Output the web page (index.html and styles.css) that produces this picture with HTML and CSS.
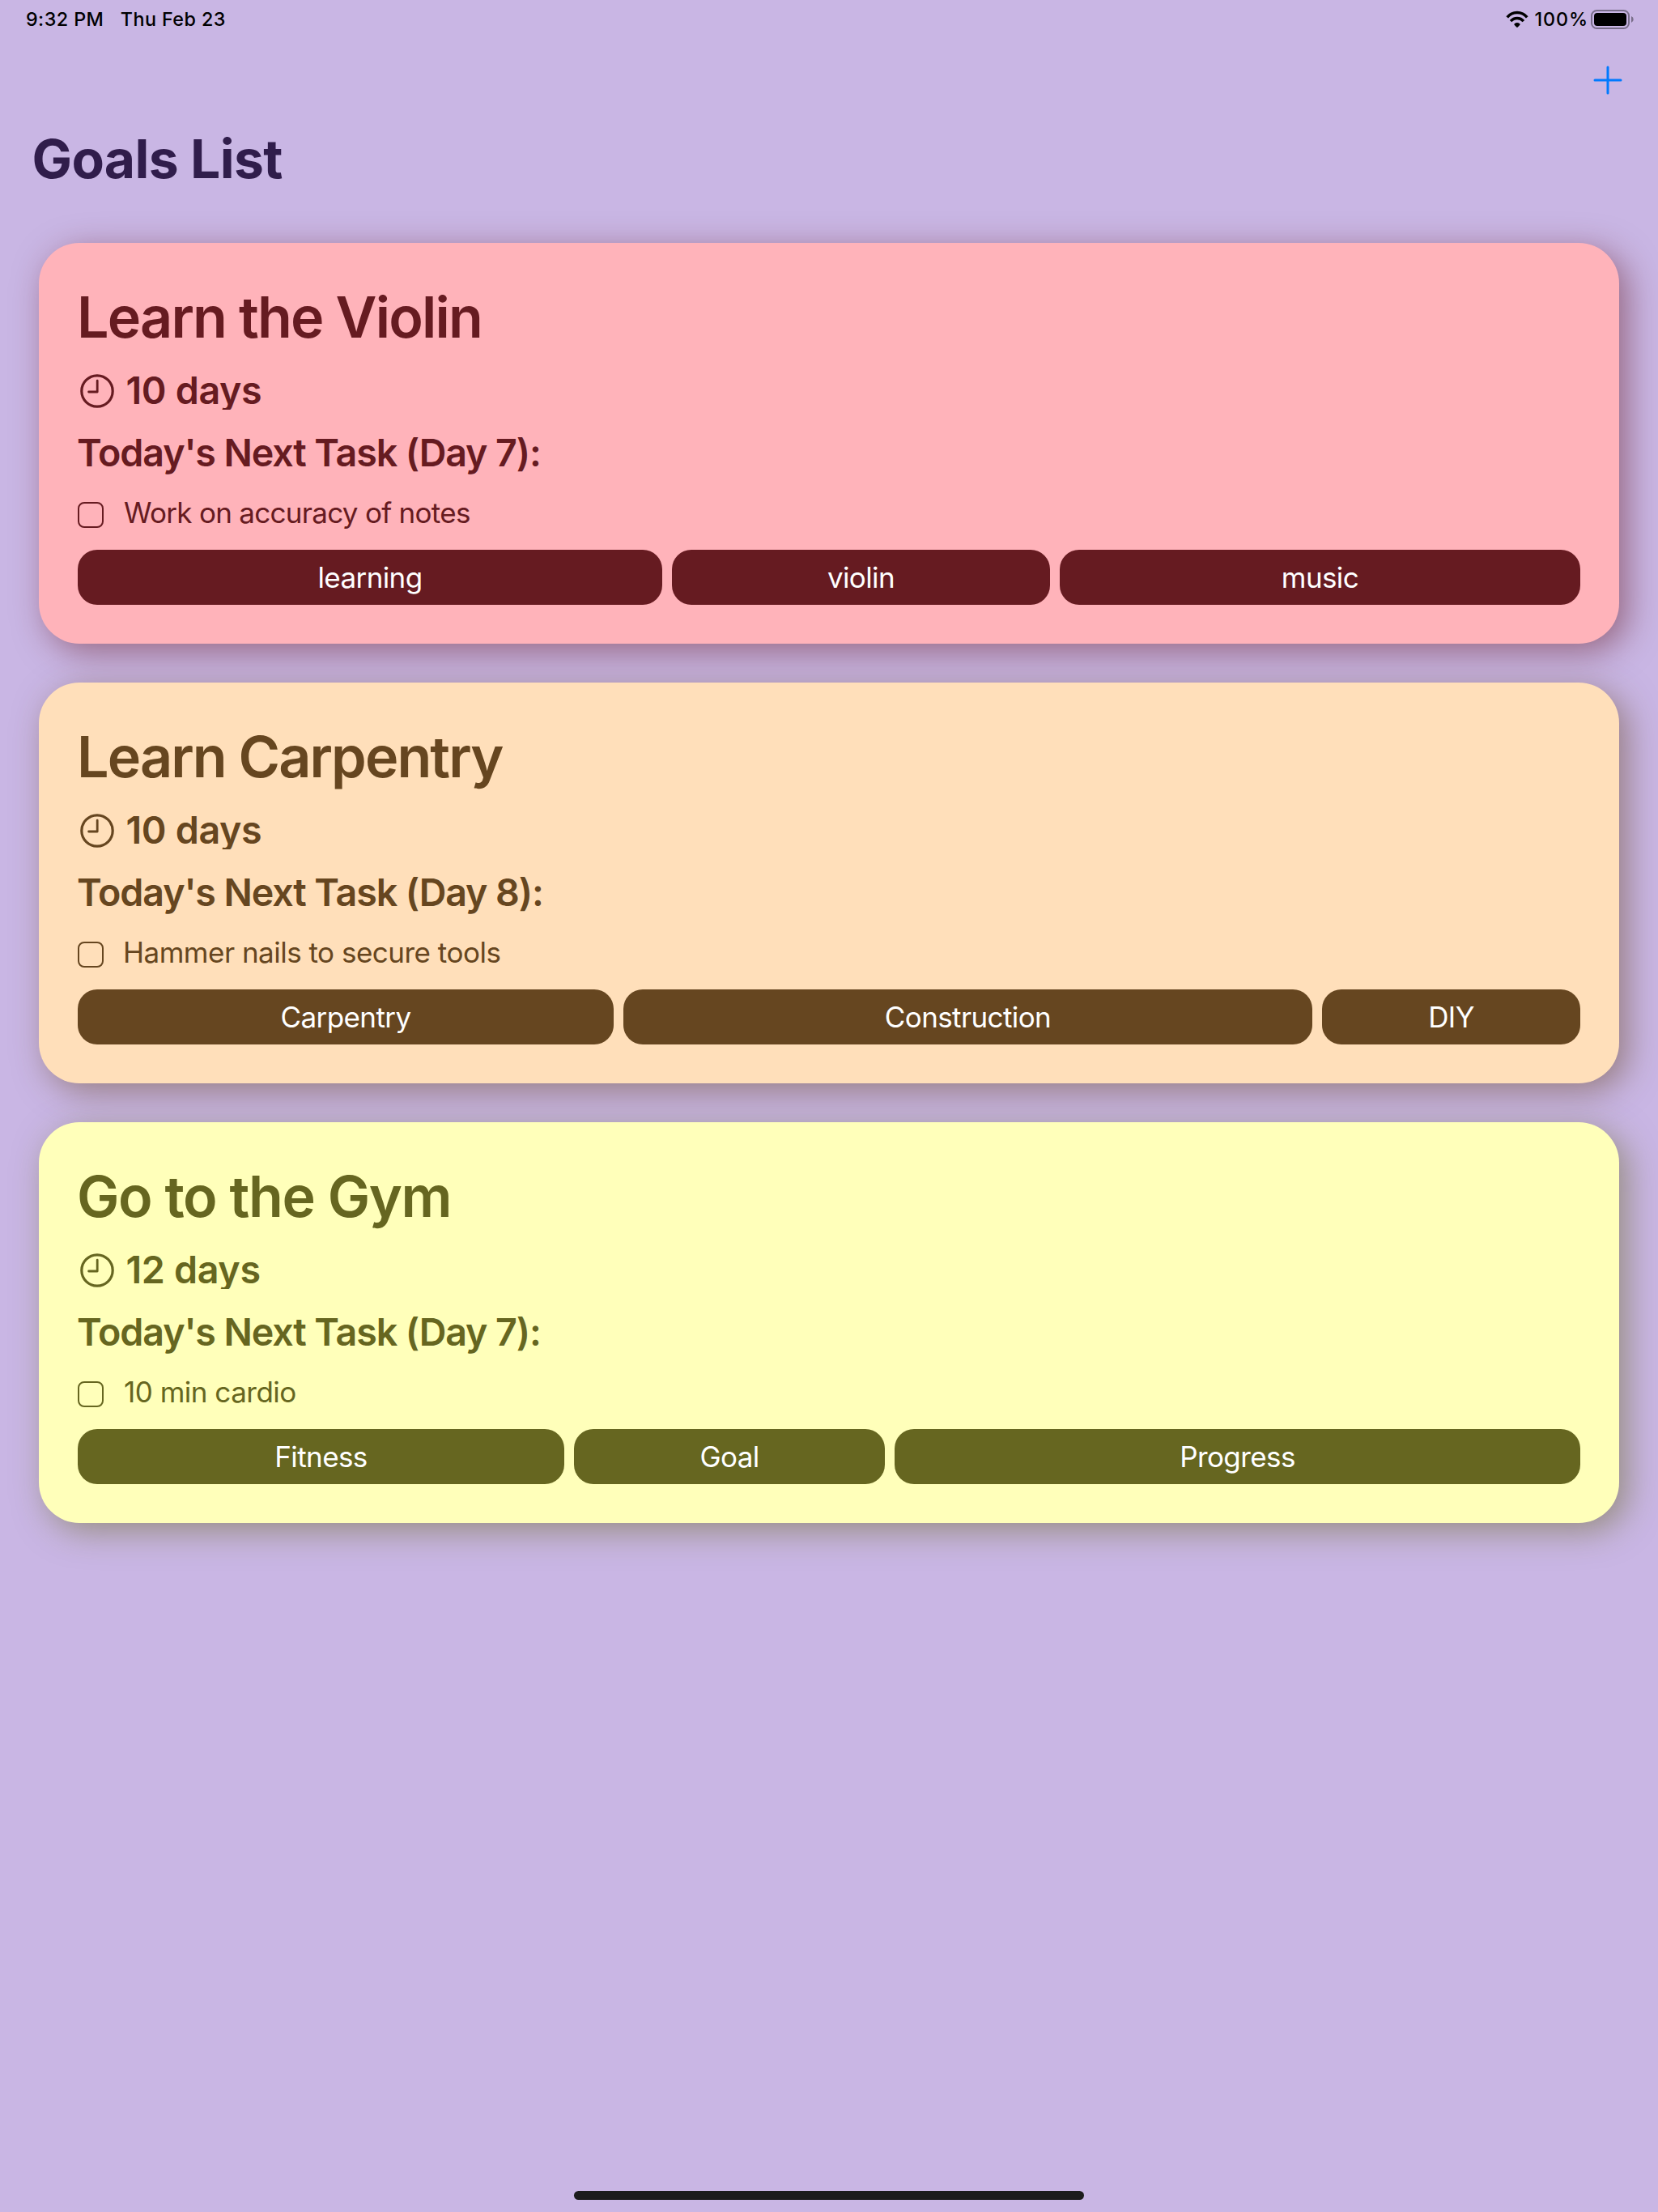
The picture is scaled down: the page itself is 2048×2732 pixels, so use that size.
FILE: index.html
```html
<!DOCTYPE html>
<html lang="en">
<head>
<meta charset="utf-8">
<title>Goals List</title>
<link rel="stylesheet" href="styles.css">
</head>
<body>
<svg class="sprite" aria-hidden="true">
  <symbol id="clock" viewBox="0 0 42 42">
    <circle cx="21" cy="21" r="19.2" fill="none" stroke="currentColor" stroke-width="3.2"/>
    <path d="M21.2 8.2V22H10.6" fill="none" stroke="currentColor" stroke-width="2.8" stroke-linecap="round" stroke-linejoin="round"/>
  </symbol>
</svg>
<div class="screen">
  <header class="status">
    <div class="status-left">
      <span class="time">9:32 PM</span>
      <span class="date">Thu Feb 23</span>
    </div>
    <div class="status-right">
      <svg class="wifi" viewBox="0 0 28 22">
        <g fill="none" stroke="#000" stroke-width="3.4">
          <path d="M1.7 8.4A15.8 15.8 0 0 1 26.3 8.4"/>
          <path d="M6.1 13.1A10.4 10.4 0 0 1 21.9 13.1"/>
        </g>
        <path d="M13.2 20.4L10.6 17.8Q9.9 17 10.8 16.3A5.4 5.4 0 0 1 17.2 16.3Q18.1 17 17.4 17.8L14.8 20.4Q14 21.2 13.2 20.4Z"/>
      </svg>
      <span class="percent">100%</span>
      <svg class="battery" viewBox="0 0 54 24">
        <rect x="1" y="1" width="46" height="22" rx="6.5" fill="none" stroke="#000" stroke-opacity=".4" stroke-width="2"/>
        <rect x="4" y="4" width="40" height="16" rx="4"/>
        <path d="M50 8A4.3 4.3 0 0 1 50 16Z" fill-opacity=".4"/>
      </svg>
    </div>
  </header>

  <nav class="nav">
    <svg class="plus" viewBox="0 0 36 36">
      <path d="M18 2V34M2 18H34" fill="none" stroke="#007aff" stroke-width="3" stroke-linecap="round"/>
    </svg>
  </nav>

  <h1 class="heading">Goals List</h1>

  <main class="goals">
    <section class="card card-violin">
      <h2 class="title">Learn the Violin</h2>
      <div class="days"><svg class="clock"><use href="#clock"/></svg><span>10 days</span></div>
      <h3 class="next">Today's Next Task (Day 7):</h3>
      <div class="task"><span class="box"></span><span>Work on accuracy of notes</span></div>
      <div class="tags">
        <span class="tag" style="flex-grow:722">learning</span>
        <span class="tag" style="flex-grow:467">violin</span>
        <span class="tag" style="flex-grow:643">music</span>
      </div>
    </section>

    <section class="card card-carpentry">
      <h2 class="title">Learn Carpentry</h2>
      <div class="days"><svg class="clock"><use href="#clock"/></svg><span>10 days</span></div>
      <h3 class="next">Today's Next Task (Day 8):</h3>
      <div class="task"><span class="box"></span><span>Hammer nails to secure tools</span></div>
      <div class="tags">
        <span class="tag" style="flex-grow:662">Carpentry</span>
        <span class="tag" style="flex-grow:851">Construction</span>
        <span class="tag" style="flex-grow:319">DIY</span>
      </div>
    </section>

    <section class="card card-gym">
      <h2 class="title">Go to the Gym</h2>
      <div class="days"><svg class="clock"><use href="#clock"/></svg><span>12 days</span></div>
      <h3 class="next">Today's Next Task (Day 7):</h3>
      <div class="task"><span class="box"></span><span>10 min cardio</span></div>
      <div class="tags">
        <span class="tag" style="flex-grow:601">Fitness</span>
        <span class="tag" style="flex-grow:384">Goal</span>
        <span class="tag" style="flex-grow:847">Progress</span>
      </div>
    </section>
  </main>

  <footer class="home"><span class="home-bar"></span></footer>
</div>
</body>
</html>
```
FILE: styles.css
```css
* { box-sizing: border-box; }

body {
  margin: 0;
  font-family: Inter, "Liberation Sans", sans-serif;
  background: #c9b6e4;
}

.sprite { display: none; }

.screen {
  display: flex;
  flex-direction: column;
  height: 2732px;
  overflow: hidden;
}

/* Status bar */
.status {
  display: flex;
  justify-content: space-between;
  height: 48px;
  padding: 9px 29px 0 32px;
  font-size: 23.3px;
  font-weight: 500;
  line-height: 29px;
  color: #000;
}

.status-left { display: flex; gap: 20.5px; letter-spacing: 0.45px; }
.status-right { display: flex; }
.wifi { width: 28px; height: 22px; margin: 4px 8px 0 0; }
.percent { letter-spacing: 0.9px; margin-right: 3px; }
.battery { width: 54px; height: 24px; margin-top: 3px; }

/* Navigation */
.nav {
  display: flex;
  justify-content: flex-end;
  height: 108px;
  padding: 32.5px 44.5px 0 0;
}

.plus { width: 36px; height: 36px; }

.heading {
  margin: 0 0 64px 39.5px;
  font-size: 66px;
  font-weight: 700;
  line-height: 80px;
  letter-spacing: -0.65px;
  color: #301d4b;
}

/* Goal cards */
.goals {
  display: flex;
  flex: 1;
  flex-direction: column;
  gap: 48px;
  padding: 0 48px;
}

.card {
  height: 495px;
  padding: 48px;
  border-radius: 50px;
  background: var(--light);
  color: var(--dark);
  box-shadow: 10px 10px 40px var(--shade);
}

.card-violin { --light: #ffb3ba; --dark: #661b21; --shade: rgba(102, 27, 33, 0.5); }
.card-carpentry { --light: #ffdfba; --dark: #664620; --shade: rgba(102, 70, 32, 0.5); }
.card-gym { --light: #ffffba; --dark: #666620; --shade: rgba(102, 102, 32, 0.5); }

.title {
  margin: 0 0 0 -1px;
  font-size: 70px;
  font-weight: 600;
  line-height: 87px;
  letter-spacing: -1.8px;
}

.card-carpentry .title { letter-spacing: -1.88px; }
.card-gym .title { letter-spacing: -1.4px; }

.days {
  display: flex;
  gap: 14.5px;
  height: 57px;
  margin-top: 14px;
  padding-left: 3px;
  overflow: hidden;
  font-size: 46.6px;
  font-weight: 600;
  line-height: 66px;
  letter-spacing: -0.34px;
}

.clock { width: 42px; height: 42px; margin-top: 12.5px; }

.next {
  margin: 24px 0 0 -1px;
  font-size: 46.6px;
  font-weight: 600;
  line-height: 58px;
  letter-spacing: -1.1px;
}

.task {
  display: flex;
  gap: 25px;
  height: 44px;
  margin-top: 23px;
  font-size: 35px;
  line-height: 44px;
  letter-spacing: -0.71px;
}

.card-carpentry .task { gap: 24px; letter-spacing: -0.5px; }
.card-gym .task { letter-spacing: -0.5px; }

.box {
  width: 32px;
  height: 32px;
  margin-top: 9px;
  border: 2px solid;
  border-radius: 8px;
}

.tags { display: flex; gap: 12px; margin-top: 24px; }

.tag {
  flex: 1 1 0;
  border-radius: 24px;
  background: var(--dark);
  color: #fff;
  font-size: 35px;
  line-height: 68px;
  letter-spacing: -0.6px;
  text-align: center;
}

/* Home indicator */
.home { display: flex; justify-content: center; height: 26px; }
.home-bar { width: 630px; height: 11px; border-radius: 6px; background: #1c1c1c; }
```
